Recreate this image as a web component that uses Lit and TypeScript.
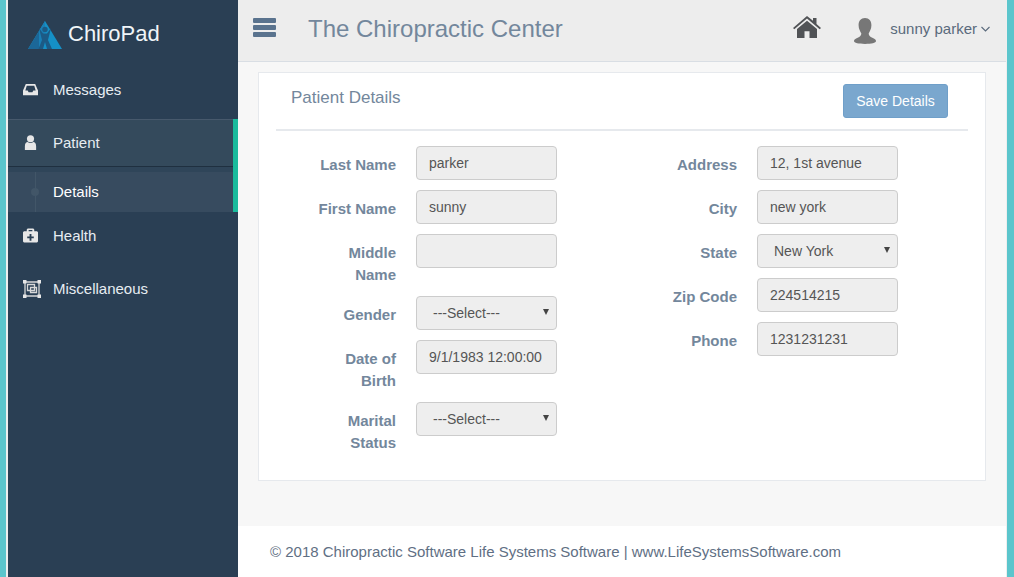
import { LitElement, html, css } from "lit";
import { customElement } from "lit/decorators.js";

const F = (label: string, value: string) => html`<div class="row"><label>${label}</label><div class="field">${value}</div></div>`;
const S = (label: string, value: string) => html`<div class="row"><label>${label}</label><div class="field sel">${value}<span class="arrow"></span></div></div>`;

@customElement("app-root")
export class AppRoot extends LitElement {
  static styles = css`
    :host { display: block; height: 577px; overflow: hidden; font-family: "Liberation Sans", Arial, sans-serif; color: #6b7a90; }
    .frame { display: flex; height: 577px; background: #5bc5cc; padding: 0 7px 0 6px; box-sizing: border-box; }
    .inner { display: flex; flex: 1; min-width: 0; border-left: 2px solid #eee; border-right: 1px solid #eee; }
    .side { width: 230px; flex: none; background: #2a3f54; color: #ecf0f1; font-size: 15px; }
    .brand { height: 68px; display: flex; align-items: center; gap: 6px; padding-left: 20px; font-size: 22px; color: #f0f5f8; box-sizing: border-box; }
    .brand svg { width: 34px; height: 28px; margin-top: 2px; }
    .item { display: flex; align-items: center; height: 53px; padding-left: 15px; color: #e7edf2; box-sizing: border-box; }
    .item svg { width: 15px; height: 15px; margin-right: 15px; flex: none; fill: #e7e7e7; }
    .item.wide svg { width: 18px; height: 18px; margin-right: 12px; }
    .msg { margin-top: -5px; margin-bottom: 3px; }
    .open { border-right: 5px solid #1abb9c; }
    .patient { height: 48px; padding-bottom: 2px; background: #344a5c; border-top: 1px solid #47596c; border-bottom: 1px solid #1f3040; }
    .open .gap { height: 5px; background: #2f4559; }
    .details { position: relative; display: flex; align-items: center; height: 40px; box-sizing: border-box; padding: 0 0 2px 45px; background: #374b5f; color: #fff; }
    .details::before { content: ""; position: absolute; left: 27px; top: 0; bottom: 0; width: 1px; background: #425668; }
    .details::after { content: ""; position: absolute; left: 23px; top: 16px; width: 8px; height: 8px; border-radius: 50%; background: #425668; }
    .health { height: 48px; padding-bottom: 2px; }
    .misc { height: 57px; }
    .main { flex: 1; min-width: 0; display: flex; flex-direction: column; background: #f7f7f7; }
    .top { height: 62px; box-sizing: border-box; background: #ededed; border-bottom: 1px solid #d9dee4; display: flex; align-items: center; padding: 0 16px 4px 15px; }
    .burger { width: 23px; height: 19px; display: flex; flex-direction: column; justify-content: space-between; margin-right: 32px; margin-top: -3px; }
    .burger i { display: block; height: 5px; background: #5a738e; border-radius: 1px; }
    .title { font-size: 24px; color: #73879c; flex: 1; }
    .home { width: 28px; height: 23px; fill: #515356; margin-right: 33px; margin-top: -5px; }
    .user { width: 22px; height: 26px; margin-right: 14px; margin-top: 4px; fill: #777; }
    .uname { font-size: 15px; color: #5a6a7c; margin-right: 4px; }
    .chev { width: 9px; height: 6px; flex: none; fill: none; stroke: #5a6a7c; stroke-width: 1.1; }
    .content { flex: 1; padding: 10px 20px 0; min-height: 0; }
    .panel { height: 409px; box-sizing: border-box; background: #fff; border: 1px solid #e6e9ed; padding: 0 17px; }
    .phead { height: 58px; box-sizing: border-box; border-bottom: 2px solid #e6e9ed; display: flex; justify-content: space-between; padding: 0 20px 0 15px; }
    .phead h2 { margin: 15px 0 0; font-size: 17px; font-weight: 400; color: #73879c; }
    .btn { margin-top: 11px; width: 105px; height: 34px; background: #7aa7ce; border: 1px solid #6f9fc9; border-radius: 3px; box-sizing: border-box; color: #fff; font-size: 14px; display: flex; align-items: center; justify-content: center; }
    .cols { display: grid; grid-template-columns: 341px 1fr; padding-top: 15px; }
    .col { display: flex; flex-direction: column; }
    .row { display: flex; gap: 20px; margin-bottom: 10px; }
    label { width: 84px; margin-left: 36px; flex: none; text-align: right; font-weight: 700; font-size: 15px; line-height: 22px; padding-top: 8px; color: #73879c; }
    .field { position: relative; width: 141px; height: 34px; flex: none; box-sizing: border-box; background: #eee; border: 1px solid #ccc; border-radius: 4px; font-size: 14px; color: #555; padding: 0 12px; line-height: 32px; white-space: nowrap; overflow: hidden; }
    .sel { padding-left: 16px; }
    .arrow { position: absolute; right: 7px; top: 12px; width: 0; height: 0; border: 3.5px solid transparent; border-top: 6px solid #444; border-bottom: 0; }
    .foot { height: 51px; background: #fff; display: flex; align-items: center; padding-left: 32px; font-size: 15px; color: #5f6f84; }
  `;
  render() {
    return html`<div class="frame"><div class="inner">
      <nav class="side">
        <div class="brand">
          <svg viewBox="0 0 34 28"><path d="M17 0 L34 28 H0Z" fill="#1590c6"/><path d="M0 28 L11 10 L14 28Z" fill="#1b6798"/><path d="M11 10 L17 0 L17 6 L14 28 L11 28Z" fill="#1a7fb5"/><path d="M11 7 L15 12.500 L19 12.500 L23 7 L21 15 L20 19 L24 28 H19 L17 21 L15 28 H10.500 L14 19 L13 15Z" fill="#1c5a85"/><circle cx="17" cy="8.500" r="2.700" fill="#1c5a85"/></svg>
          <span>ChiroPad</span>
        </div>
        <div class="item msg"><svg viewBox="0 0 16 16"><path d="M3 2h10l3 7v5H0V9zM4 4 2.500 9H5l1 2h4l1-2h2.500L12 4z"/></svg>Messages</div>
        <div class="open">
          <div class="item patient"><svg viewBox="0 0 16 16"><circle cx="8" cy="4" r="3.800"/><path d="M2 16v-4c0-3 1.500-4.500 3-4.500 1.500 1.500 4.500 1.500 6 0 1.500 0 3 1.500 3 4.500v4z"/></svg>Patient</div>
          <div class="gap"></div>
          <div class="details">Details</div>
        </div>
        <div class="item health"><svg viewBox="0 0 16 15"><path fill-rule="evenodd" d="M5 0h6l1 1v2h3l1 1v10l-1 1H1l-1-1V4l1-1h3V1zm1 1.500V3h4V1.500zM7 6v2.500H4.500v2H7V13h2v-2.500h2.500v-2H9V6z"/></svg>Health</div>
        <div class="item wide misc"><svg viewBox="0 0 18 18"><path fill="none" stroke="#d8d8d8" stroke-width="1.300" d="M2 2h14v14H2zM4.500 4.500h7v6h-7zM7.500 7.500h6v5h-6z"/><path d="M0 0h3.500v3.500H0zM14.500 0H18v3.500h-3.500zM0 14.500h3.500V18H0zM14.500 14.500H18V18h-3.500z"/></svg>Miscellaneous</div>
      </nav>
      <div class="main">
        <header class="top">
          <div class="burger"><i></i><i></i><i></i></div>
          <div class="title">The Chiropractic Center</div>
          <svg class="home" viewBox="0 0 28 24" preserveAspectRatio="none"><path d="M14 1 L20 6V3h3.500v6.500L28 13.500l-1.300 1.300L14 3.600 1.300 14.800 0 13.500z"/><path d="M14 6 24 14.500V24H16.500V17h-5v7H4V14.500z"/></svg>
          <svg class="user" viewBox="0 0 24 27" preserveAspectRatio="none"><path d="M12 0c4.500 0 7 3 7 7.500 0 4-2 6.500-3 8.500 0 2 1.500 3.500 4 4.500 2.500 1 4 2 4 3.500 0 2-5 3-12 3S0 26 0 24c0-1.500 1.500-2.500 4-3.500s4-2.500 4-4.500c-1-2-3-4.500-3-8.500C5 3 7.500 0 12 0z"/></svg>
          <span class="uname">sunny parker</span>
          <svg class="chev" viewBox="0 0 9 6"><path d="M0.500 1 4.500 5 8.500 1"/></svg>
        </header>
        <div class="content">
          <section class="panel">
            <div class="phead"><h2>Patient Details</h2><div class="btn">Save Details</div></div>
            <div class="cols">
              <div class="col">
                ${F("Last Name", "parker")}${F("First Name", "sunny")}${F("Middle Name", "")}${S("Gender", "---Select---")}${F("Date of Birth", "9/1/1983 12:00:00")}${S("Marital Status", "---Select---")}
              </div>
              <div class="col">
                ${F("Address", "12, 1st avenue")}${F("City", "new york")}${S("State", "New York")}${F("Zip Code", "224514215")}${F("Phone", "1231231231")}
              </div>
            </div>
          </section>
        </div>
        <footer class="foot">© 2018 Chiropractic Software Life Systems Software | www.LifeSystemsSoftware.com</footer>
      </div>
    </div></div>`;
  }
}
